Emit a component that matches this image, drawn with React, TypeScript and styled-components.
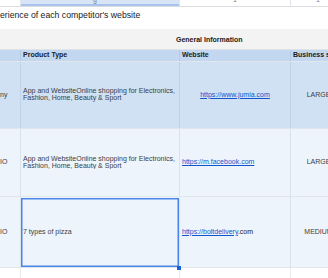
import React from 'react';
import styled, {createGlobalStyle, css} from 'styled-components';

const GlobalStyle = createGlobalStyle`
  html, body {
    margin: 0;
    padding: 0;
    background: #ffffff;
    overflow: hidden;
  }
  body {
    font-family: 'Liberation Sans', Arial, sans-serif;
    color: #3c4043;
  }
`;

const COLS = '21px 159px 111px 56px';

const Sheet = styled.div`
  width: 328px;
  height: 278px;
  overflow: hidden;
  display: flex;
  flex-direction: column;
`;

const Row = styled.div<{$h: number; $bg?: string}>`
  display: grid;
  grid-template-columns: ${COLS};
  height: ${p => p.$h}px;
  background: ${p => p.$bg || '#ffffff'};
  border-bottom: 1px solid #e1e6ec;
  box-sizing: border-box;
  flex-shrink: 0;
`;

const StripCell = styled.div<{$tint?: boolean; $at?: number}>`
  position: relative;
  overflow: hidden;
  border-right: 1px solid #e1e3e6;
  background: ${p => (p.$tint ? '#d7e5f7' : '#ffffff')};
  ${p => p.$tint && css`box-shadow: inset 0 -2px 0 #a9c4ec;`}
  font-size: 7px;
  color: #80868b;
  line-height: 7px;
  & > span {
    display: block;
    margin-top: -4px;
    padding-left: ${p => p.$at ?? 0}px;
  }
`;

const TitleRow = styled.div`
  height: 22px;
  display: flex;
  align-items: center;
  font-size: 8.7px;
  color: #202124;
  white-space: nowrap;
  padding-bottom: 6px;
  box-sizing: border-box;
  flex-shrink: 0;
`;

const GroupRow = styled.div`
  height: 21px;
  background: #f3f3f3;
  display: flex;
  align-items: center;
  padding-left: 176px;
  font-size: 7px;
  font-weight: bold;
  color: #202124;
  border-bottom: 1px solid #dfe3e8;
  box-sizing: border-box;
  flex-shrink: 0;
`;

const Cell = styled.div<{$align?: 'left' | 'center'; $bold?: boolean; $selected?: boolean; $flush?: boolean}>`
  position: relative;
  display: flex;
  align-items: center;
  justify-content: ${p => (p.$align === 'center' ? 'center' : 'flex-start')};
  padding: 0 ${p => (p.$flush ? 0 : 2)}px;
  box-sizing: border-box;
  border-right: 1px solid rgba(110, 135, 170, 0.16);
  font-size: 7px;
  line-height: 6.8px;
  font-weight: ${p => (p.$bold ? 'bold' : 'normal')};
  color: ${p => (p.$bold ? '#202124' : '#3c4043')};
  white-space: nowrap;
  ${p =>
    p.$selected &&
    css`
      box-shadow: inset 0 0 0 1.5px #4a86e8;
      margin-top: 1px;
      &::after {
        content: '';
        position: absolute;
        right: -2px;
        bottom: -3px;
        width: 4px;
        height: 4px;
        background: #1a5fd6;
      }
    `}
`;

const Clip = styled.span`
  display: block;
  overflow: hidden;
  width: 100%;
`;

const Link = styled.a`
  color: #1155cc;
  text-decoration: underline;
`;

const Plain = styled.span`
  color: #202124;
`;

const rows = [
  {
    bg: '#d0e1f3',
    h: 67,
    a: 'ny',
    product: ['App and WebsiteOnline shopping for Electronics,', 'Fashion, Home, Beauty & Sport'],
    link: 'https://www.jumia.com',
    rest: '',
    linkAlign: 'center' as const,
    size: 'LARGE',
  },
  {
    bg: '#eef4fb',
    h: 68,
    a: 'IO',
    product: ['App and WebsiteOnline shopping for Electronics,', 'Fashion, Home, Beauty & Sport'],
    link: 'https://m.facebook.com',
    rest: '',
    linkAlign: 'left' as const,
    size: 'LARGE',
  },
  {
    bg: '#eef4fb',
    h: 71,
    a: 'IO',
    product: ['7 types of pizza'],
    link: 'https://boltdelivery',
    rest: '.com',
    linkAlign: 'left' as const,
    size: 'MEDIUM',
    selected: true,
  },
];

const App: React.FC = () => {
  return (
    <Sheet>
      <GlobalStyle />
      <Row $h={7} style={{borderBottom: '1px solid #dadce0'}}>
        <StripCell />
        <StripCell $tint $at={72}>
          <span>g</span>
        </StripCell>
        <StripCell $at={53}>
          <span>1</span>
        </StripCell>
        <StripCell $at={25}>
          <span>1</span>
        </StripCell>
      </Row>
      <TitleRow>erience of each competitor&apos;s website</TitleRow>
      <GroupRow>General Information</GroupRow>
      <Row $h={12} $bg="#c3d7f0">
        <Cell $bold />
        <Cell $bold>Product Type</Cell>
        <Cell $bold>Website</Cell>
        <Cell $bold>Business size</Cell>
      </Row>
      {rows.map((r, i) => (
        <Row key={i} $h={r.h} $bg={r.bg}>
          <Cell $flush>{r.a}</Cell>
          <Cell $selected={r.selected}>
            <Clip>
              {r.product.map((line, j) => (
                <div key={j}>{line}</div>
              ))}
            </Clip>
          </Cell>
          <Cell $align={r.linkAlign}>
            <span>
              <Link href="#">{r.link}</Link>
              {r.rest && <Plain>{r.rest}</Plain>}
            </span>
          </Cell>
          <Cell $align="center">{r.size}</Cell>
        </Row>
      ))}
      <Row $h={12}>
        <Cell />
        <Cell />
        <Cell />
        <Cell />
      </Row>
    </Sheet>
  );
};

export default App;
